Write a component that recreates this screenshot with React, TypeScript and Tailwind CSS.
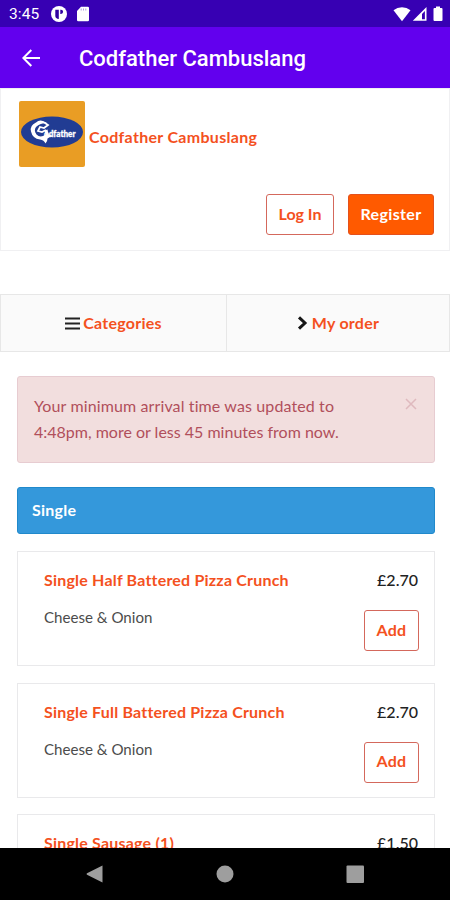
import React from "react";

const items = [
  { name: "Single Half Battered Pizza Crunch", note: "Cheese & Onion", price: "£2.70" },
  { name: "Single Full Battered Pizza Crunch", note: "Cheese & Onion", price: "£2.70" },
  { name: "Single Sausage (1)", note: "", price: "£1.50" },
];

function StatusBar() {
  return (
    <div className="flex h-[27px] shrink-0 items-center bg-[#3700b3] pl-[9px] pr-[7px] font-[Roboto,sans-serif] text-white">
      <span className="w-[42px] pt-[2px] text-[15.5px] leading-none tracking-[0.1px]">3:45</span>
      <svg className="h-4 w-4" viewBox="0 0 16 16">
        <circle cx="8" cy="8" r="8" fill="#fff" />
        <path d="M4.300 3.700h3.500v9.300c-2.100-.2-3.500-1.300-3.500-3zM9.300 3.700h.7a2.100 2.100 0 0 1 0 4.200h-.7z" fill="#3000a0" />
      </svg>
      <svg className="ml-[10px] h-4 w-3" viewBox="0 0 12 16">
        <path d="M4 .8h6.700q1.300 0 1.300 1.300v11.800q0 1.300-1.300 1.300H1.300Q0 15.200 0 13.900V5z" fill="#fff" />
        <path d="M4.200 2.500v2M6.500 2.500v2M8.800 2.500v2" stroke="#a792dc" strokeWidth=".9" />
      </svg>
      <span className="grow" />
      <svg className="h-4 w-[18px]" viewBox="0 0 18 16">
        <path d="M.5 4.200Q4.200 1.200 9 1.200t8.500 3L9 15.200z" fill="#fff" />
      </svg>
      <svg className="ml-px h-4 w-[15px]" viewBox="0 0 15 16">
        <path fillRule="evenodd" d="M14.500 1v13.700H.8zM12.900 5.100 10 8v5.200h2.900z" fill="#fff" />
      </svg>
      <svg className="ml-[6px] h-4 w-[10px]" viewBox="0 0 10 16">
        <path d="M3 .5h4V2h1.500q1 0 1 1v11q0 1-1 1h-7q-1 0-1-1V3q0-1 1-1H3z" fill="#fff" />
      </svg>
    </div>
  );
}

function Logo() {
  return (
    <svg className="h-[66px] w-[66px] shrink-0" viewBox="0 0 66 66">
      <rect width="66" height="66" rx="2" fill="#e99d24" />
      <ellipse cx="33" cy="31" rx="31" ry="15.500" fill="#213c93" />
      <path d="M28 22q-5-3-11-.5-6.500 3-5 9 1.500 7 9 8 4 .5 5.500 4 2-2 2-5l5-3-4-1-1-5-3 1 1 4q-5 4-9 0-3-4-.5-7.500Q21 22 28 22" fill="#fff" />
      <path d="M18 22q3-3 8 0l3 2-4 3-4-1-2 4 4 1 4-2" fill="none" stroke="#fff" strokeWidth="1.800" />
      <text x="25" y="35.500" fill="#fff" stroke="#fff" strokeWidth=".3" fontFamily="Lato, sans-serif" fontWeight="900" fontSize="8.800" textLength="31.500" lengthAdjust="spacingAndGlyphs">odfather</text>
    </svg>
  );
}

function MenuItem({ item }: { item: (typeof items)[number] }) {
  return (
    <div className="flex h-[115px] shrink-0 justify-between border border-[#e9e9eb] pl-[26px] pr-[15px] pt-[16px]">
      <div className="flex flex-col">
        <span className="text-base font-bold leading-6 tracking-[0.2px] text-[#f4511e]">{item.name}</span>
        <span className="mt-[13px] text-[15.1px] leading-6 text-[#4c4c4c]">{item.note}</span>
      </div>
      <div className="flex flex-col items-end">
        <span className="pr-px text-base font-medium leading-6 text-[#222]">{item.price}</span>
        <button className="mt-[18px] h-[41px] w-[55px] rounded-[3px] border border-[#d4685c] pb-[2px] text-base font-bold tracking-[0.3px] text-[#f4511e]">Add</button>
      </div>
    </div>
  );
}

export default function App() {
  return (
    <div className="flex h-[900px] w-[450px] flex-col overflow-hidden bg-white font-[Lato,sans-serif] [font-variant-ligatures:none]">
      <StatusBar />
      <header className="flex h-[61px] shrink-0 items-center bg-[#6200ee] pl-[22px] text-white">
        <svg className="h-[18px] w-[18px]" viewBox="0 0 18 18" fill="none" stroke="#fff" strokeWidth="2">
          <path d="M18 9H1.500M9.300 1 1.300 9l8 8" />
        </svg>
        <h1 className="ml-[39px] pt-[2px] font-[Roboto,sans-serif] text-[22px] font-medium leading-none">Codfather Cambuslang</h1>
      </header>
      <main className="flex min-h-0 grow flex-col overflow-hidden">
        <section className="flex h-[163px] shrink-0 flex-col border border-[#f0f0f2] pl-[18px] pr-[15px] pt-[12px]">
          <div className="flex items-center gap-1">
            <Logo />
            <span className="pt-[6px] text-base font-bold tracking-[0.3px] text-[#f4511e]">Codfather Cambuslang</span>
          </div>
          <div className="mt-[27px] flex justify-end gap-[14px]">
            <button className="h-[41px] w-[68px] rounded-[3px] border border-[#d4685c] pb-[2px] text-base font-bold text-[#f4511e]">Log In</button>
            <button className="h-[41px] w-[86px] rounded-[3px] border border-[#e4511c] bg-[#ff5a00] pb-[2px] text-base font-bold tracking-[0.35px] text-white">Register</button>
          </div>
        </section>
        <nav className="mt-[43px] flex h-[58px] shrink-0 border border-[#e7e7e7] bg-[#fafafa] text-base font-bold tracking-[0.25px] text-[#f4511e]">
          <div className="flex w-[226px] items-center justify-center gap-[3px] border-r border-[#e7e7e7]">
            <svg className="h-[13px] w-[15px]" viewBox="0 0 15 13">
              <path d="M0 1.500h15M0 6.500h15M0 11.500h15" stroke="#222" strokeWidth="2" />
            </svg>
            Categories
          </div>
          <div className="flex grow items-center justify-center gap-1">
            <svg className="h-[14px] w-[11px]" viewBox="0 0 11 14">
              <path d="M2 1.300 8 7l-6 5.700" fill="none" stroke="#161616" strokeWidth="3" />
            </svg>
            My order
          </div>
        </nav>
        <div className="flex grow flex-col pl-[17px] pr-[15px]">
          <div className="mt-[24px] flex h-[87px] shrink-0 justify-between rounded-[3px] border border-[#e7ccd1] bg-[#f2dede] pl-[16px] pr-[17px] pt-[16px] text-[#b14f5b]">
            <p className="whitespace-nowrap text-base leading-[26px]">
              <span className="tracking-[0.12px]">Your minimum arrival time was updated to</span>
              <br />
              4:48pm, more or less 45 minutes from now.
            </p>
            <svg className="mt-[5px] h-3 w-3" viewBox="0 0 12 12" stroke="#dfb9be" strokeWidth="1.500">
              <path d="M1 1l10 10M11 1 1 11" />
            </svg>
          </div>
          <h2 className="mt-[24px] flex h-[47px] shrink-0 items-center rounded-[3px] border border-[#2089cb] bg-[#3498db] pb-px pl-[14px] text-base font-bold tracking-[0.25px] text-white">Single</h2>
          <div className="mt-[17px] flex flex-col gap-[16.5px]">
            {items.map((item) => (
              <MenuItem key={item.name} item={item} />
            ))}
          </div>
        </div>
      </main>
      <footer className="h-[52px] shrink-0 bg-black">
        <svg className="block h-[52px] w-[450px]" viewBox="0 0 450 52" fill="#9e9e9e">
          <path d="M102.500 17.500v17L87 26.800q-1-.8 0-1.600z" />
          <circle cx="225" cy="26" r="8.500" />
          <rect x="346.500" y="17.500" width="17.500" height="17.500" rx="1" />
        </svg>
      </footer>
    </div>
  );
}
